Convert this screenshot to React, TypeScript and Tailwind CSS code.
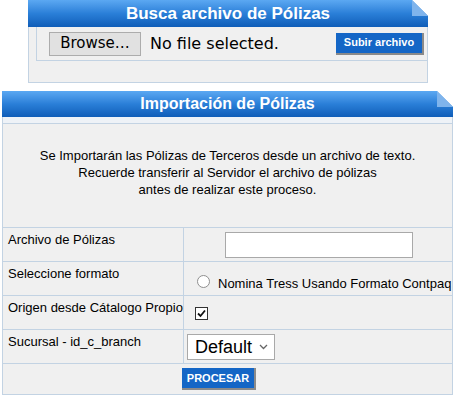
import React from "react";

const headerCls =
  "relative flex items-center justify-center text-white font-bold bg-gradient-to-b from-[#5ba8f2] via-[#2a7fd8] to-[#0f5db8]";

function Fold() {
  return (
    <svg className="absolute right-0 top-0" width="16" height="16" viewBox="0 0 16 16">
      <polygon points="0,0 16,16 16,0" fill="#ffffff" />
      <polygon points="0,0 16,16 0,16" fill="#7fb4ec" />
    </svg>
  );
}

function BlueButton({ children, className = "" }: { children: React.ReactNode; className?: string }) {
  return (
    <button
      className={`bg-[#1466c6] text-white font-bold text-[11px] border-r-2 border-b-2 border-[#8a8a8a] ${className}`}
      style={{ fontFamily: "Tahoma, 'Liberation Sans', sans-serif" }}
    >
      {children}
    </button>
  );
}

const rows = [
  { label: "Archivo de Pólizas" },
  { label: "Seleccione formato" },
  { label: "Origen desde Cátalogo Propio" },
  { label: "Sucursal - id_c_branch" },
];

export default function App() {
  return (
    <div className="w-[455px] h-[399px] bg-white text-black" style={{ fontFamily: "'Liberation Sans', Arial, sans-serif" }}>
      {/* Busca archivo */}
      <div className="ml-[28px] w-[400px]">
        <div className={`${headerCls} h-[27px] text-[17px]`}>
          Busca archivo de Pólizas
          <Fold />
        </div>
        <div className="bg-[#f0f0f0] border-x border-b border-[#c3d3e3]">
          <div className="flex items-center h-[34px] ml-[7px] border-l border-b border-[#c3d3e3] -mr-px">
            <div className="ml-[12px] w-[92px] h-[24px] border border-[#acacac] bg-[#e1e1e1] flex items-center justify-center" style={{ fontFamily: "'DejaVu Sans', Verdana, sans-serif" }}>
              <span className="text-[15px]">Browse…</span>
            </div>
            <span className="ml-[9px] text-[16px]" style={{ fontFamily: "'DejaVu Sans', Verdana, sans-serif" }}>No file selected.</span>
            <BlueButton className="ml-auto mr-[4px] w-[88px] h-[22px]">Subir archivo</BlueButton>
          </div>
          <div className="h-[21px]" />
        </div>
      </div>

      {/* Importación */}
      <div className="ml-[2px] w-[451px] mt-[8px]">
        <div className={`${headerCls} h-[26px] text-[16px]`}>
          Importación de Pólizas
          <Fold />
        </div>
        <div className="bg-[#f0f0f0] border-x border-b border-[#c3d3e3]">
          <div className="h-[7px] bg-[#eef2f7] border-b border-[#c3d3e3]" />
          <div className="h-[103px] flex flex-col items-center justify-center text-[13px] leading-[17px] text-center pb-[6px]">
            <div>Se Importarán las Pólizas de Terceros desde un archivo de texto.</div>
            <div>Recuerde transferir al Servidor el archivo de pólizas</div>
            <div>antes de realizar este proceso.</div>
          </div>
          {rows.map((r, i) => (
            <div key={r.label} className="flex h-[34px] border-t border-[#c3d3e3] text-[13px]">
              <div className="w-[181px] border-r border-[#c3d3e3] pl-[5px] pt-[2px]">{r.label}</div>
              <div className="flex-1 relative">
                {i === 0 && (
                  <div className="absolute left-[41px] top-[4px] w-[188px] h-[26px] bg-white border border-[#a9a9a9]" />
                )}
                {i === 1 && (
                  <div className="flex items-end h-full pb-[2px] pl-[13px]">
                    <span className="w-[13px] h-[13px] rounded-full border border-[#8f8f8f] bg-white mb-[5px]" />
                    <span className="ml-[8px]">Nomina Tress Usando Formato Contpaq</span>
                  </div>
                )}
                {i === 2 && (
                  <div className="pl-[11px] pt-[11px]">
                    <div className="w-[13px] h-[13px] border border-[#333] bg-white flex items-center justify-center">
                      <svg width="9" height="9" viewBox="0 0 9 9">
                        <path d="M1 4.5 L3.5 7 L8 1.5" stroke="#111" strokeWidth="1.8" fill="none" />
                      </svg>
                    </div>
                  </div>
                )}
                {i === 3 && (
                  <div className="absolute left-[3px] top-[4px] w-[88px] h-[26px] bg-white border border-[#a9a9a9] flex items-center pl-[7px] text-[18px]">
                    <span>Default</span>
                    <svg className="ml-auto mr-[6px]" width="9" height="6" viewBox="0 0 9 6">
                      <path d="M1 1 L4.5 4.5 L8 1" stroke="#666" strokeWidth="1.3" fill="none" />
                    </svg>
                  </div>
                )}
              </div>
            </div>
          ))}
          <div className="h-[31px] border-t border-[#c3d3e3] flex items-start pt-[4px] pl-[179px]">
            <BlueButton className="w-[74px] h-[22px]">PROCESAR</BlueButton>
          </div>
        </div>
      </div>
    </div>
  );
}
